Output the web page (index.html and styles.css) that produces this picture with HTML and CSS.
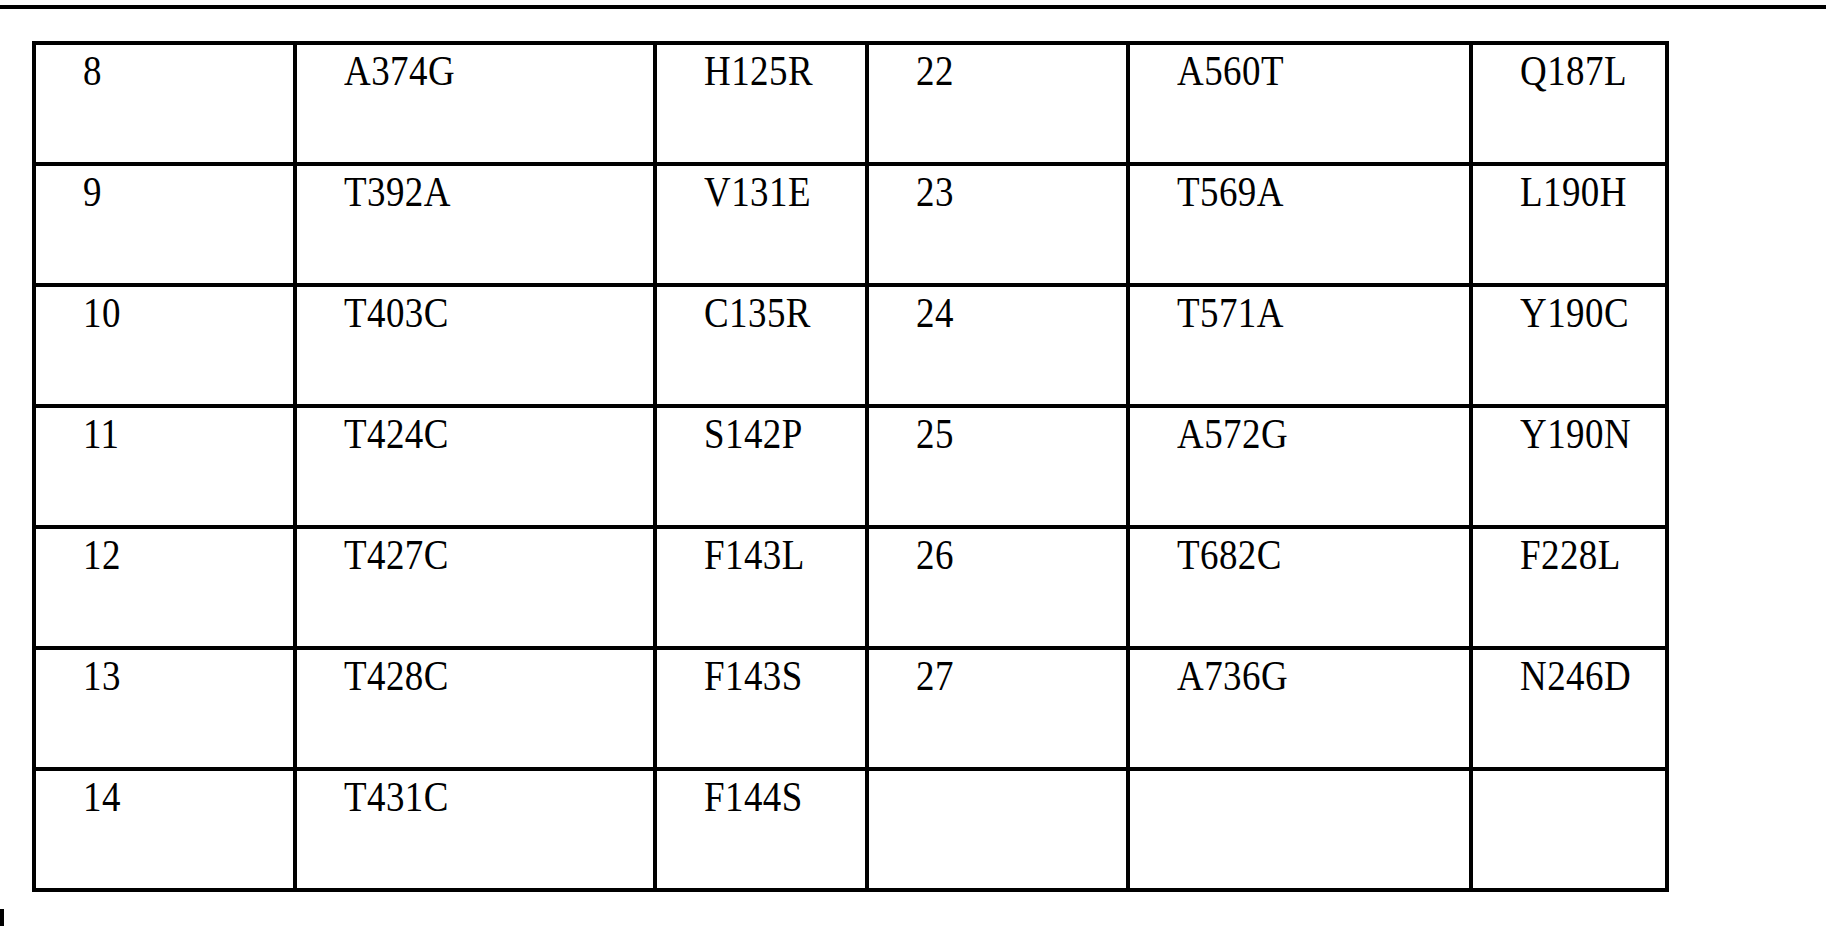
FILE: index.html
```html
<!DOCTYPE html>
<html>
<head>
<meta charset="utf-8">
<link rel="stylesheet" href="styles.css">
</head>
<body>
<div class="rule"></div>
<div class="grid">
  <div class="cell"><span>8</span></div><div class="cell"><span>A374G</span></div><div class="cell"><span>H125R</span></div><div class="cell"><span>22</span></div><div class="cell"><span>A560T</span></div><div class="cell"><span>Q187L</span></div>
  <div class="cell"><span>9</span></div><div class="cell"><span>T392A</span></div><div class="cell"><span>V131E</span></div><div class="cell"><span>23</span></div><div class="cell"><span>T569A</span></div><div class="cell"><span>L190H</span></div>
  <div class="cell"><span>10</span></div><div class="cell"><span>T403C</span></div><div class="cell"><span>C135R</span></div><div class="cell"><span>24</span></div><div class="cell"><span>T571A</span></div><div class="cell"><span>Y190C</span></div>
  <div class="cell"><span>11</span></div><div class="cell"><span>T424C</span></div><div class="cell"><span>S142P</span></div><div class="cell"><span>25</span></div><div class="cell"><span>A572G</span></div><div class="cell"><span>Y190N</span></div>
  <div class="cell"><span>12</span></div><div class="cell"><span>T427C</span></div><div class="cell"><span>F143L</span></div><div class="cell"><span>26</span></div><div class="cell"><span>T682C</span></div><div class="cell"><span>F228L</span></div>
  <div class="cell"><span>13</span></div><div class="cell"><span>T428C</span></div><div class="cell"><span>F143S</span></div><div class="cell"><span>27</span></div><div class="cell"><span>A736G</span></div><div class="cell"><span>N246D</span></div>
  <div class="cell"><span>14</span></div><div class="cell"><span>T431C</span></div><div class="cell"><span>F144S</span></div><div class="cell"></div><div class="cell"></div><div class="cell"></div>
</div>
<div class="mark"></div>
</body>
</html>
```

FILE: styles.css
```css
html, body {
  margin: 0;
  padding: 0;
  background: #ffffff;
  height: 927px;
  overflow: hidden;
}
body {
  font-family: "Liberation Serif", "Noto Sans CJK SC", serif;
  color: #000000;
}
.rule {
  margin-top: 5px;
  width: 1826px;
  height: 4px;
  background: #000000;
}
.grid {
  margin-top: 32px;
  margin-left: 32px;
  display: grid;
  grid-template-columns: 257px 356px 208px 257px 339px 192px;
  grid-auto-rows: 117px;
  gap: 4px;
  padding: 4px;
  width: max-content;
  background: #000000;
}
.cell {
  background: #ffffff;
  padding: 2px 0 0 47px;
  font-size: 42px;
  line-height: 48px;
}
.cell span {
  display: inline-block;
  transform: scaleX(0.88);
  transform-origin: left top;
  letter-spacing: 0.5px;
}
.mark {
  margin-top: 17px;
  width: 4px;
  height: 17px;
  background: #000000;
}
```
